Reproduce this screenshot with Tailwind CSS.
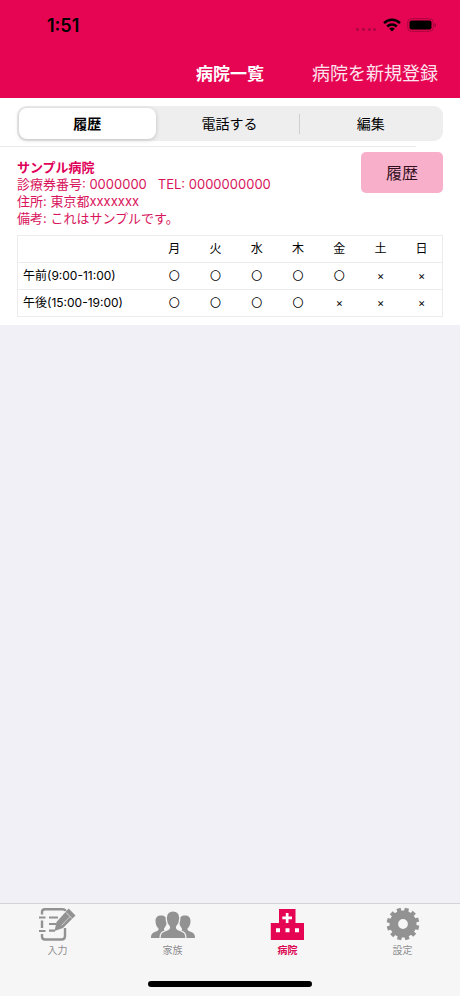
<!DOCTYPE html>
<html lang="ja">
<head>
<meta charset="utf-8">
<meta name="viewport" content="width=device-width, initial-scale=1">
<title>病院一覧</title>
<script src="https://cdn.jsdelivr.net/npm/@tailwindcss/browser@4"></script>
</head>
<body class="flex min-h-screen flex-col bg-[#f0f0f6] font-['Inter','Noto_Sans_CJK_JP',sans-serif] text-black">
<header class="bg-[#e60552] pb-px">
  <div class="flex h-[49px] items-center justify-between pr-6 pl-[47px]">
    <time class="pt-[2px] text-[18px] leading-6 font-semibold">1:51</time>
    <div class="flex items-center gap-[6px]">
      <svg class="h-4 w-[21px]" viewBox="0 0 21 16" fill="#b20545" aria-hidden="true"><rect y="11" width="3" height="3" rx="1"/><rect x="6" y="11" width="3" height="3" rx="1"/><rect x="12" y="11" width="3" height="3" rx="1"/><rect x="17" y="11" width="3" height="3" rx="1"/></svg>
      <svg class="h-[14px] w-[18px]" viewBox="0 0 18 14" fill="none" stroke="#000" stroke-width="2.5" aria-hidden="true"><path d="M1 5.2C5.4.6 12.6.6 17 5.2M4.2 8.5c2.7-2.7 6.900-2.700 9.600 0"/><path d="M9 13.500 6.200 10.700c1.600-1.500 4-1.500 5.600 0z" fill="#000" stroke="none"/></svg>
      <svg class="h-[14px] w-[29px]" viewBox="0 0 29 14" aria-hidden="true"><rect x=".7" y=".7" width="25.600" height="12.600" rx="3.800" fill="none" stroke="#a8063f"/><rect x="2.500" y="2.500" width="22" height="9" rx="2"/><path d="M27.500 5v4q1.500-.6 1.500-2t-1.500-2z" fill="#8f0838"/></svg>
    </div>
  </div>
  <div class="grid h-12 grid-cols-[1fr_auto_1fr] items-center pt-[2px] pr-[22px] pl-[22px]">
    <h1 class="col-start-2 text-[17px] leading-6 font-bold text-white">病院一覧</h1>
    <button type="button" class="justify-self-end text-[18px] leading-6 whitespace-nowrap text-[#ffe3ee]">病院を新規登録</button>
  </div>
</header>
<main class="flex-1">
  <div class="bg-white px-[17px] pt-2 pb-[5px]">
    <div class="grid h-[35px] grid-cols-3 items-center rounded-[9px] bg-[#eeeeef] p-[2px] text-sm">
      <button type="button" aria-pressed="true" class="mr-1 h-full rounded-lg bg-white font-bold shadow-[0_1px_4px_rgba(0,0,0,0.2)]">履歴</button>
      <button type="button" class="h-5 border-r border-[#cfcfd2] leading-5">電話する</button>
      <button type="button" class="h-5 leading-5">編集</button>
    </div>
  </div>
  <section class="bg-white">
    <div class="mr-11 border-t border-[#ececee]"></div>
    <div class="px-[17px] pt-[5px] pb-2">
      <div class="flex items-start justify-between">
        <div class="pt-[7px] text-[13px] leading-[17px] text-[#d8145c]">
          <h2 class="font-bold text-[#e00058]">サンプル病院</h2>
          <p class="flex gap-[11px]"><span>診療券番号: 0000000</span><span>TEL: 0000000000</span></p>
          <p>住所: 東京都xxxxxxx</p>
          <p>備考: これはサンプルです。</p>
        </div>
        <button type="button" class="h-[41px] w-[82px] rounded-[5px] bg-[#f8afc9] text-base text-[#33101f]">履歴</button>
      </div>
      <table class="mt-2 w-full table-fixed border-collapse border border-[#ececee] text-center text-xs">
        <colgroup><col class="w-[32%]"><col><col><col><col><col><col><col></colgroup>
        <thead>
          <tr class="h-[27px]"><td></td><th scope="col" class="font-normal">月</th><th scope="col" class="font-normal">火</th><th scope="col" class="font-normal">水</th><th scope="col" class="font-normal">木</th><th scope="col" class="font-normal">金</th><th scope="col" class="font-normal">土</th><th scope="col" class="font-normal">日</th></tr>
        </thead>
        <tbody class="text-[11px]">
          <tr class="h-[27px] border-t border-[#ececee]"><th scope="row" class="pl-[5px] text-left text-xs font-normal whitespace-nowrap">午前(9:00-11:00)</th><td>〇</td><td>〇</td><td>〇</td><td>〇</td><td>〇</td><td>×</td><td>×</td></tr>
          <tr class="h-[27px] border-t border-[#ececee]"><th scope="row" class="pl-[5px] text-left text-xs font-normal whitespace-nowrap">午後(15:00-19:00)</th><td>〇</td><td>〇</td><td>〇</td><td>〇</td><td>×</td><td>×</td><td>×</td></tr>
        </tbody>
      </table>
    </div>
  </section>
</main>
<footer class="border-t border-[#d3d3d6] bg-[#f7f6f7] pb-[9px]">
  <nav class="grid h-[77px] grid-cols-4 items-start text-[10px] leading-[14px] text-[#8e8e90]">
    <a href="#input" class="flex flex-col items-center pt-[3px]">
      <svg class="h-9 w-[38px]" viewBox="0 0 38 36" fill="none" stroke="#929292" aria-hidden="true">
        <path d="M3 7.500V5q0-2.700 3-2.700h17.500q2.500 0 3 1.700M3 13.500v7.500M3 27v2.500q0 3 3 3h16.500q3.500 0 3.500-3.500V21" stroke-width="2.400"/>
        <path d="M0 10.500h6.500M0 24h6.500M10 10.500h9M10 17h7M10 23.700h6" stroke-width="2.200"/>
        <path d="m15.500 24 2-9L29.700 1.500 36.500 8.500 24 21z" fill="#929292" stroke="none"/>
        <path d="m27 5.500 6.200 6.200" stroke="#f7f6f7" stroke-width=".7"/>
        <path d="m22.500 18.500 8.500-9" stroke="#d2d2d2" stroke-width=".9"/>
      </svg>
      <span>入力</span>
    </a>
    <a href="#family" class="flex flex-col items-center pt-[3px]">
      <svg class="h-9 w-[46px]" viewBox="0 0 46 36" fill="#929292" aria-hidden="true">
        <path d="M1 31c0-4 1.500-5.200 5-6.500 2-.8 2.800-1.500 2.500-3C6.500 19.500 5.500 17 5.500 14c0-3.500 2-5.500 5.500-5.500S17 10.500 17 14c0 3-1.500 6-3 7.500 0 1.500 0 2.200 2 3L10 31zM45 31c0-4-1.500-5.200-5-6.500-2-.8-2.800-1.500-2.500-3 2-2 3-4.500 3-7.500 0-3.500-2-5.500-5.500-5.500S29 10.500 29 14c0 3 1.500 6 3 7.500 0 1.500 0 2.200-2 3L36 31z"/>
        <path d="M10 31.500c0-5 1.500-6.500 6-8 2.800-1 3.800-1.800 3.500-3.500-2-2.300-3.300-5.200-3.300-8.700C16.200 6.500 18.800 4 23 4s6.800 2.500 6.800 7.300c0 3.500-1.300 6.400-3.300 8.700-.3 1.700.7 2.500 3.500 3.500 4.500 1.500 6 3 6 8z" stroke="#f7f6f7" stroke-width="1.200"/>
      </svg>
      <span>家族</span>
    </a>
    <a href="#hospital" aria-current="page" class="flex flex-col items-center pt-[3px] font-bold text-[#dc0752]">
      <svg class="h-9 w-[36px]" viewBox="0 0 36 36" fill="#e60552" aria-hidden="true">
        <path d="M9 2h16.500v14h8.500v17H.8V16H9z"/>
        <path d="M15.800 6h2.700v3.500H22v2.700h-3.500V16h-2.700v-3.800h-3.500V9.500h3.500zM6 21.200h4v4H6zM15.500 21.200h4v4h-4zM25 21.200h4v4h-4z" fill="#fff"/>
      </svg>
      <span>病院</span>
    </a>
    <a href="#settings" class="flex flex-col items-center pt-[3px]">
      <svg class="h-9 w-[36px]" viewBox="-18 -17 36 36" fill="none" stroke="#929292" aria-hidden="true">
        <circle r="9.200" stroke-width="8.600"/>
        <path d="M0-16.300V-12M0 16.300V12M16.300 0H12M-16.300 0H-12M-8.150-14.120-6-10.390M8.150-14.120 6-10.390M-8.150 14.120-6 10.390M8.150 14.120 6 10.390M14.120-8.150 10.390-6M-14.120 8.150-10.390 6M14.120 8.150 10.390 6M-14.120-8.150-10.390-6" stroke-width="4.300" transform="rotate(14)"/>
      </svg>
      <span>設定</span>
    </a>
  </nav>
  <div class="mx-auto h-[6px] w-[164px] rounded-full bg-black"></div>
</footer>
</body>
</html>
